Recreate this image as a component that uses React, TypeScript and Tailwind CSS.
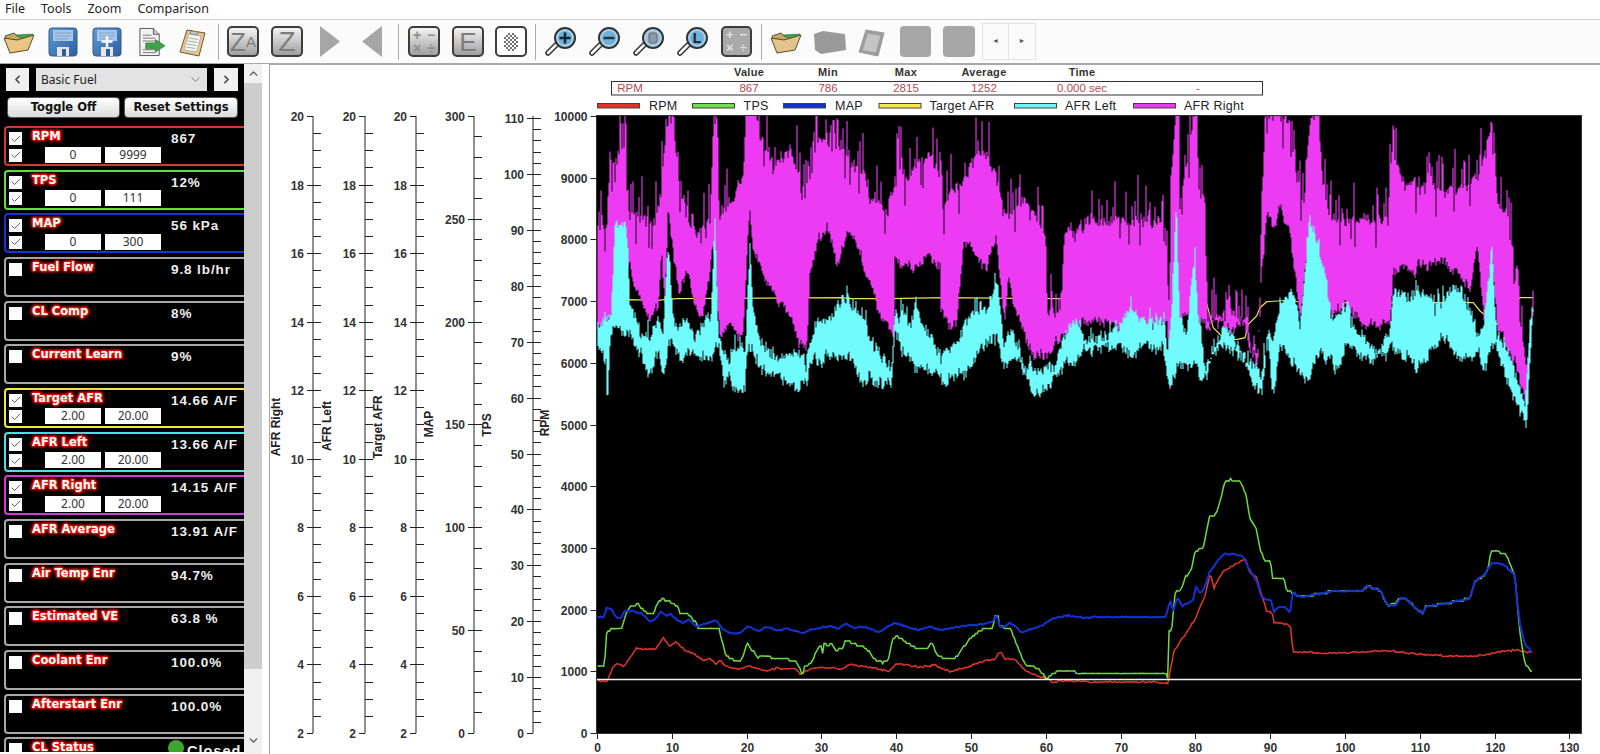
import { Check, ChevronDown, ChevronLeft, ChevronRight, ChevronUp } from "lucide-react";

type Pt = [number, number];

const crop = (ox: number, oy: number, sx: number, pts: Pt[]): Pt[] =>
  pts.map(([x, y]) => [ox + x / sx, oy + y / 3]);

// chart traces, read off the log view
const rpmTrace = [
  ...crop(590, 560, 2.904, [[22,360],[50,360],[65,320],[80,308],[100,315],[135,262],[160,265],[190,265],[212,230],[230,255],[250,242],[280,272],[305,280],[330,300],[350,292],[365,310],[378,295],[392,315],[430,325],[465,315],[510,330],[540,322],[600,325],[610,340],[650,320],[730,323],[755,310],[820,320],[870,330],[890,308],[960,318],[1000,312],[1045,332],[1090,320],[1150,298],[1175,295],[1192,270],[1205,295],[1235,295],[1260,325],[1300,345],[1330,352],[1340,362],[1400,360],[1450,362],[1560,362]]),
  ...crop(1100, 560, 3, [[38,362],[205,365],[212,320],[222,270]]),
  ...crop(1130, 440, 3, [[195,535],[225,465],[240,398],[252,440],[278,392],[345,353],[360,395],[380,410],[410,510],[430,520]]),
  ...crop(1100, 560, 3, [[520,185],[560,188],[575,205],[577,272],[700,277],[800,272],[870,270],[960,280],[1050,285],[1130,285],[1200,272],[1250,267],[1300,275]]),
];

const tpsTrace = [
  ...crop(590, 560, 2.904, [[22,315],[42,315],[48,215],[60,205],[92,205],[105,158],[120,135],[140,130],[165,157],[185,155],[200,118],[215,115],[255,135],[262,155],[285,160],[308,185],[312,200],[375,205],[395,285],[430,305],[442,290],[455,248],[468,262],[485,290],[520,282],[530,292],[595,298],[610,320],[617,345],[622,315],[640,310],[660,265],[670,250],[675,280],[680,242],[690,260],[700,247],[715,270],[735,258],[742,235],[760,247],[800,260],[830,297],[850,305],[865,300],[880,232],[892,226],[935,255],[960,265],[985,258],[992,245],[1010,285],[1035,292],[1060,292],[1080,265],[1105,230],[1140,205],[1170,205],[1175,165],[1185,165],[1190,197],[1220,203],[1245,265],[1265,315],[1300,320],[1325,352],[1340,340],[1365,328],[1420,335],[1560,335]]),
  ...crop(1100, 560, 3, [[38,335],[198,335],[203,350],[207,210],[215,205],[225,98]]),
  ...crop(1130, 440, 3, [[132,458],[155,445],[165,410],[185,385],[195,330],[220,322],[238,228],[255,225],[270,180],[285,125],[300,115],[335,125],[350,170],[360,235],[378,258],[390,325],[405,360],[422,362],[427,415],[460,410],[470,445],[490,458],[500,462],[515,468],[610,450],[697,450],[710,435],[750,448],[772,492],[790,490],[812,470],[830,475],[865,510],[880,515],[885,497],[960,485],[1020,472],[1035,420],[1060,405],[1075,380],[1082,332],[1105,332],[1130,342],[1155,405],[1165,520]]),
  ...crop(1100, 560, 3, [[1258,200],[1265,250],[1275,310],[1300,335]]),
];

const mapTrace = [
  ...crop(590, 560, 2.904, [[22,168],[40,168],[48,142],[60,142],[78,172],[90,172],[100,150],[125,150],[150,158],[175,182],[190,172],[205,153],[220,165],[235,160],[255,178],[270,185],[285,175],[310,195],[330,190],[345,185],[362,178],[372,185],[385,205],[410,217],[435,217],[458,195],[490,212],[512,198],[540,206],[580,205],[620,217],[640,205],[700,195],[720,203],[742,187],[765,200],[800,198],[838,214],[885,185],[950,207],[990,198],[1020,208],[1080,195],[1130,190],[1170,182],[1180,162],[1192,200],[1205,195],[1220,185],[1235,195],[1252,215],[1280,205],[1310,195],[1345,172],[1390,163],[1430,170],[1560,167]]),
  ...crop(1130, 440, 3, [[0,527],[108,527],[120,478],[130,510],[142,470],[158,495],[190,477],[197,435],[208,455],[222,445],[240,390],[270,350],[285,338],[335,342],[350,370],[380,420],[395,470],[425,480],[430,515],[445,497],[465,497],[480,518],[488,455],[500,462],[515,468],[610,450],[697,450],[710,435],[750,448],[772,492],[795,495],[812,470],[830,475],[865,510],[880,518],[885,497],[960,485],[1020,472],[1035,420],[1060,405],[1085,367],[1110,367],[1130,378],[1155,405],[1160,480],[1170,540]]),
  ...crop(1100, 560, 3, [[1260,190],[1275,250],[1300,278]]),
];

const targetTrace = [
  ...crop(590, 110, 3, [[24,568],[120,566],[200,568],[260,563],[760,560],[775,563],[900,563],[1060,560],[1400,563]]),
  ...crop(1080, 110, 3, [[265,570],[378,570],[400,650],[430,680],[470,686],[495,680],[505,640],[530,615],[540,590],[560,572],[640,567],[660,575],[1180,575],[1200,600],[1250,640],[1310,570],[1320,560],[1360,560]]),
];

const rightTop = [
  ...crop(590, 110, 3, [[24,350],[50,350],[60,120],[110,120],[118,320],[170,340],[195,330],[215,220],[228,20],[255,20],[262,200],[300,340],[320,365],[360,320],[370,20],[382,20],[388,320],[430,300],[460,200],[470,20],[500,20],[510,100],[550,170],[600,120],[640,280],[655,200],[665,90],[730,90],[760,100],[820,170],[840,260],[900,280],[920,160],[965,200],[1020,120],[1060,280],[1110,220],[1150,140],[1220,160],[1235,330],[1300,280],[1368,390],[1372,590],[1410,590],[1425,350],[1500,330]]),
  ...crop(1080, 110, 3, [[255,335],[268,560],[275,200],[282,100],[288,20],[297,20],[300,280],[320,200],[345,20],[352,20],[355,220],[375,280],[380,620],[430,610],[500,610],[510,700],[535,750],[540,600],[545,260],[555,90],[560,20],[640,20],[650,200],[670,320],[690,20],[715,20],[725,180],[745,330],[800,330],[920,330],[935,160],[985,220],[1060,230],[1120,240],[1190,220],[1230,60],[1240,20],[1250,250],[1285,290],[1300,420],[1315,600],[1340,790],[1355,620],[1358,600]]),
];

const rightBottom = [
  ...crop(590, 110, 3, [[24,640],[60,640],[118,470],[150,540],[180,620],[205,600],[215,430],[225,600],[235,300],[250,420],[270,550],[290,470],[310,570],[335,630],[355,520],[370,430],[390,680],[420,610],[460,660],[478,260],[490,400],[515,460],[535,520],[560,560],[600,600],[650,720],[660,470],[685,375],[715,370],[740,480],[775,370],[810,450],[850,540],[880,650],[912,690],[915,440],[950,480],[1010,430],[1050,470],[1052,600],[1075,640],[1100,630],[1120,420],[1150,410],[1190,450],[1218,400],[1245,600],[1255,490],[1275,600],[1330,700],[1380,740],[1420,680],[1500,640]]),
  ...crop(1080, 110, 3, [[262,640],[270,850],[285,640],[300,600],[315,580],[340,620],[375,620],[380,640],[430,640],[500,655],[510,720],[535,750],[540,560],[560,300],[580,340],[600,290],[625,360],[640,460],[660,620],[690,350],[720,460],[750,600],[800,580],[860,640],[930,640],[940,460],[1000,480],[1050,440],[1120,470],[1170,530],[1190,390],[1215,650],[1235,420],[1255,680],[1300,760],[1340,860],[1355,620]]),
];

const leftTop = [
  ...crop(590, 110, 3, [[24,640],[50,640],[62,620],[75,340],[110,340],[120,560],[150,650],[180,690],[205,610],[220,690],[235,400],[250,620],[270,660],[290,620],[320,670],[350,640],[362,680],[375,340],[385,670],[400,740],[465,740],[480,400],[490,600],[510,700],[560,730],[650,740],[680,600],[730,620],[775,590],[810,670],[860,730],[905,760],[915,590],[960,640],[985,600],[1020,670],[1060,730],[1100,710],[1150,620],[1190,600],[1222,500],[1240,700],[1265,650],[1300,740],[1340,780],[1385,770],[1420,700],[1470,650],[1500,680]]),
  ...crop(1080, 110, 3, [[130,625],[250,625],[262,700],[275,600],[290,240],[298,600],[320,680],[345,400],[355,620],[380,780],[430,650],[470,700],[530,790],[545,790],[565,650],[580,700],[600,570],[640,540],[660,650],[690,350],[715,400],[760,640],[800,560],[830,640],[880,680],[925,680],[940,540],[1000,570],[1060,560],[1120,530],[1180,620],[1210,660],[1235,390],[1250,650],[1300,780],[1335,880],[1350,620],[1358,590]]),
];

const leftBottom = [
  ...crop(590, 110, 3, [[24,720],[48,720],[52,880],[60,700],[75,650],[120,680],[150,740],[180,790],[205,720],[218,790],[235,680],[270,735],[330,740],[385,690],[400,810],[465,815],[475,690],[510,760],[560,810],[650,825],[660,760],[700,780],[730,720],[775,700],[830,770],[890,830],[905,820],[915,680],[990,770],[1060,810],[1120,770],[1180,700],[1225,690],[1240,770],[1270,740],[1330,850],[1390,820],[1430,720],[1500,730]]),
  ...crop(1080, 110, 3, [[130,710],[250,710],[268,850],[300,770],[350,770],[370,820],[390,740],[430,690],[470,730],[530,820],[545,850],[565,700],[580,860],[600,710],[670,790],[720,720],[780,770],[800,710],[880,790],[930,720],[1020,740],[1100,700],[1180,740],[1215,770],[1235,700],[1300,840],[1340,950],[1350,780],[1358,610]]),
];

function valueAt(pts: Pt[], x: number) {
  if (x <= pts[0][0]) return pts[0][1];
  for (let i = 1; i < pts.length; i++) {
    if (x <= pts[i][0]) {
      const [x0, y0] = pts[i - 1];
      const [x1, y1] = pts[i];
      return x1 === x0 ? y1 : y0 + ((x - x0) / (x1 - x0)) * (y1 - y0);
    }
  }
  return pts[pts.length - 1][1];
}

function seeded(seed: number) {
  let s = seed;
  return () => (s = (s * 16807) % 2147483647) / 2147483647;
}

function noisyBand(top: Pt[], bottom: Pt[], seed: number, upChance: number, upSize: number, jitter: number) {
  const rand = seeded(seed);
  let drift = 0;
  let d = "";
  for (let x = 598; x <= 1533; x++) {
    drift = drift * 0.88 + (rand() - 0.5) * jitter;
    let t = valueAt(top, x) + drift + (rand() - 0.5) * jitter;
    const b = valueAt(bottom, x) - drift + (rand() - 0.5) * jitter;
    if (rand() < upChance) t -= rand() * upSize;
    else if (rand() < upChance / 2) t += rand() * upSize * 0.8;
    d += `M${x} ${Math.max(115, Math.min(t, b)).toFixed(1)}V${Math.max(115, Math.max(t, b)).toFixed(1)}`;
  }
  return d;
}

function roughen(pts: Pt[], seed: number, step: number, fuzz: number): Pt[] {
  const rand = seeded(seed);
  const out: Pt[] = [];
  const end = pts[pts.length - 1][0];
  for (let x = pts[0][0]; x <= end; x += 1.5) {
    out.push([x, Math.round(valueAt(pts, x) / step) * step + (rand() - 0.5) * fuzz]);
  }
  return out;
}

const rightBand = noisyBand(rightTop, rightBottom, 4711, 0.3, 42, 8);
const leftBand = noisyBand(leftTop, leftBottom, 90210, 0.12, 14, 9);
const rpmLine = roughen(rpmTrace, 123, 1, 1.4);
const tpsLine = roughen(tpsTrace, 456, 2.5, 0.4);
const mapLine = roughen(mapTrace, 789, 1, 1);

const toPoints = (pts: Pt[]) => pts.map(([x, y]) => `${x.toFixed(1)},${y.toFixed(1)}`).join(" ");

interface AxisProps {
  x: number;
  title: string;
  titleX: number;
  titleY: number;
  min: number;
  max: number;
  major: number;
  minor: number;
  unit: number;
}

function Axis({ x, title, titleX, titleY, min, max, major, minor, unit }: AxisProps) {
  const ticks: number[] = [];
  for (let v = min; v <= max + 0.001; v += minor) ticks.push(v);
  return (
    <g>
      <line x1={x} x2={x} y1={115} y2={732} stroke="#222" />
      {ticks.map((v) => {
        const y = Math.round(732 - (v - min) * unit) + 0.5;
        const isMajor = Math.abs(v / major - Math.round(v / major)) < 0.001;
        const atEnd = y < 116 || y > 732;
        return (
          <g key={v}>
            <line x1={isMajor ? x - 6 : x} x2={atEnd ? x : x + 8} y1={y} y2={y} stroke="#222" />
            {isMajor && (
              <text x={x - 9} y={y + 4.5} textAnchor="end" fontSize={12} fontWeight={700} fill="#333">
                {v}
              </text>
            )}
          </g>
        );
      })}
      <text
        transform={`translate(${titleX} ${titleY}) rotate(-90)`}
        textAnchor="middle"
        fontSize={12}
        fontWeight={700}
        fill="#222"
      >
        {title}
      </text>
    </g>
  );
}

const legend = [
  { name: "RPM", color: "#e0342a", sx: 597, tx: 649 },
  { name: "TPS", color: "#6fe04a", sx: 692, tx: 743.5 },
  { name: "MAP", color: "#1030d0", sx: 783, tx: 835 },
  { name: "Target AFR", color: "#f5e94e", sx: 878.5, tx: 929.5 },
  { name: "AFR Left", color: "#6ff5f5", sx: 1014, tx: 1065 },
  { name: "AFR Right", color: "#e83cf0", sx: 1133, tx: 1184 },
];

function Chart() {
  return (
    <svg viewBox="270 64 1330 690" className="block h-[690px] w-[1330px] bg-white">
      {[
        ["Value", 749],
        ["Min", 828],
        ["Max", 906],
        ["Average", 984],
        ["Time", 1082],
      ].map(([t, x]) => (
        <text key={t} x={x} y={75} textAnchor="middle" fontSize={11} fontWeight={700} fill="#333" letterSpacing={0.3}>
          {t}
        </text>
      ))}
      <rect x={611.5} y={80.5} width={651} height={13.5} fill="#fff" stroke="#333" />
      {[
        ["RPM", 630],
        ["867", 749],
        ["786", 828],
        ["2815", 906],
        ["1252", 984],
        ["0.000 sec", 1082],
        ["-", 1198],
      ].map(([t, x]) => (
        <text key={t} x={x} y={91} textAnchor="middle" fontSize={11.5} fill="#b8484c">
          {t}
        </text>
      ))}
      {legend.map((l) => (
        <g key={l.name}>
          <rect x={l.sx + 0.5} y={102.5} width={42} height={4.5} fill={l.color} stroke="#444" />
          <text x={l.tx} y={108.5} fontSize={12.5} fill="#222" letterSpacing={0.25}>
            {l.name}
          </text>
        </g>
      ))}

      <Axis x={313} title="AFR Right" titleX={280} titleY={426} min={2} max={20} major={2} minor={0.5} unit={34.28} />
      <Axis x={365} title="AFR Left" titleX={331} titleY={425} min={2} max={20} major={2} minor={0.5} unit={34.28} />
      <Axis x={416} title="Target AFR" titleX={382} titleY={426} min={2} max={20} major={2} minor={0.5} unit={34.28} />
      <Axis x={474} title="MAP" titleX={433} titleY={423} min={0} max={300} major={50} minor={10} unit={2.057} />
      <Axis x={533} title="TPS" titleX={491} titleY={424} min={0} max={110} major={10} minor={2} unit={5.59} />
      <Axis x={596.5} title="RPM" titleX={549} titleY={422} min={0} max={10000} major={1000} minor={1000} unit={0.0617} />

      <rect x={597} y={115} width={984} height={617} fill="#000" />
      <rect x={596.5} y={114.5} width={985} height={618} fill="none" stroke="#333" />
      <polyline points={toPoints(targetTrace)} fill="none" stroke="#e9e04a" strokeWidth={1.2} />
      <path d={rightBand} stroke="#ec3bf2" strokeWidth={1.1} />
      <path d={leftBand} stroke="#70fbfd" strokeWidth={1.1} />
      <polyline points={toPoints(rpmLine)} fill="none" stroke="#e3352b" strokeWidth={1.5} />
      <polyline points={toPoints(tpsLine)} fill="none" stroke="#6fdc3e" strokeWidth={1.5} />
      <polyline points={toPoints(mapLine)} fill="none" stroke="#1232d4" strokeWidth={2} />
      <line x1={597} x2={1581} y1={678.5} y2={678.5} stroke="#f2f2f2" strokeWidth={1.3} />

      {[0, 10, 20, 30, 40, 50, 60, 70, 80, 90, 100, 110, 120, 130].map((v) => {
        const x = Math.round(597 + v * 7.48) + 0.5;
        return (
          <g key={v}>
            <line x1={x} x2={x} y1={733} y2={738} stroke="#222" />
            <text x={x} y={751} textAnchor="middle" fontSize={12} fontWeight={700} fill="#333">
              {v}
            </text>
          </g>
        );
      })}
    </svg>
  );
}

interface RowData {
  label: string;
  value: string;
  border?: string;
  range?: [string, string];
}

const rows: RowData[] = [
  { label: "RPM", value: "867", border: "border-[#d9362a]", range: ["0", "9999"] },
  { label: "TPS", value: "12%", border: "border-[#5fe040]", range: ["0", "111"] },
  { label: "MAP", value: "56 kPa", border: "border-[#1433d8]", range: ["0", "300"] },
  { label: "Fuel Flow", value: "9.8 lb/hr" },
  { label: "CL Comp", value: "8%" },
  { label: "Current Learn", value: "9%" },
  { label: "Target AFR", value: "14.66 A/F", border: "border-[#f2e540]", range: ["2.00", "20.00"] },
  { label: "AFR Left", value: "13.66 A/F", border: "border-[#4fe0e6]", range: ["2.00", "20.00"] },
  { label: "AFR Right", value: "14.15 A/F", border: "border-[#d03cd4]", range: ["2.00", "20.00"] },
  { label: "AFR Average", value: "13.91 A/F" },
  { label: "Air Temp Enr", value: "94.7%" },
  { label: "Estimated VE", value: "63.8 %" },
  { label: "Coolant Enr", value: "100.0%" },
  { label: "Afterstart Enr", value: "100.0%" },
];

const glowLabel =
  "mt-[2px] pl-px font-['DejaVu_Sans',sans-serif] text-[11.5px] leading-[13px] font-bold text-white [text-shadow:0_0_1px_#f01408,1px_1px_2px_#f01408,-1px_-1px_2px_#f01408,1px_-1px_2px_#f01408,-1px_1px_2px_#f01408,0_0_4px_#e0140c,0_0_5px_#c0100a]";

function CheckBox({ checked }: { checked?: boolean }) {
  return (
    <span className="flex h-[13px] w-[13px] items-center justify-center bg-white">
      {checked && <Check size={12} strokeWidth={2} className="text-[#666]" />}
    </span>
  );
}

function RangeInput({ value }: { value: string }) {
  return (
    <span className="flex h-4 w-[56px] items-center justify-center bg-white font-['Noto_Sans',sans-serif] text-[12px] text-[#333]">
      {value}
    </span>
  );
}

function SensorRow({ label, value, border, range }: RowData) {
  return (
    <div className={`flex h-10 w-[260px] shrink-0 rounded-[4px] border-2 ${border ?? "border-[#a8a8a8]"}`}>
      <div className="flex w-[25px] shrink-0 flex-col gap-[3.5px] pl-[3px] pt-[4px]">
        <CheckBox checked={!!range} />
        {range && <CheckBox checked />}
      </div>
      <div className="flex w-[140px] shrink-0 flex-col">
        <span className={glowLabel}>{label}</span>
        {range && (
          <div className="mt-[3.5px] ml-[14px] flex gap-1">
            <RangeInput value={range[0]} />
            <RangeInput value={range[1]} />
          </div>
        )}
      </div>
      <span className="pt-[3px] text-[13.5px] leading-[16px] font-bold tracking-[0.9px] whitespace-nowrap text-[#eee]">
        {value}
      </span>
    </div>
  );
}

function Sidebar() {
  return (
    <aside className="flex h-[688px] w-[244px] shrink-0 flex-col overflow-hidden bg-black">
      <div className="mt-1 ml-[5.5px] flex h-[23px] items-center">
        <button className="flex h-[23px] w-[23.5px] items-center justify-center bg-[#f0f0f0]">
          <ChevronLeft size={13} strokeWidth={3} className="text-[#444]" />
        </button>
        <div className="ml-[7px] flex h-[23px] w-[171px] items-center justify-between bg-[#e3e3e3] pr-[4px] pl-[5px] font-['Noto_Sans',sans-serif] text-[12px] text-[#222]">
          Basic Fuel
          <ChevronDown size={15} strokeWidth={1.5} className="text-[#777]" />
        </div>
        <button className="ml-[7px] flex h-[23px] w-[24px] items-center justify-center bg-[#f0f0f0]">
          <ChevronRight size={13} strokeWidth={3} className="text-[#444]" />
        </button>
      </div>
      <div className="mt-[6px] ml-[7px] flex gap-1">
        <button className="h-[21px] w-[113px] rounded-[4px] border border-[#555] bg-gradient-to-b from-white to-[#dcdcdc] font-['DejaVu_Sans',sans-serif] text-[11.5px] font-bold text-[#111]">
          Toggle Off
        </button>
        <button className="h-[21px] w-[114px] rounded-[4px] border border-[#555] bg-gradient-to-b from-white to-[#dcdcdc] font-['DejaVu_Sans',sans-serif] text-[11.5px] font-bold text-[#111]">
          Reset Settings
        </button>
      </div>
      <div className="mt-2 ml-1 flex flex-col gap-[3.67px]">
        {rows.map((r) => (
          <SensorRow key={r.label} {...r} />
        ))}
        <div className="flex h-10 w-[260px] shrink-0 rounded-[4px] border-2 border-[#a8a8a8]">
          <div className="w-[25px] shrink-0 pl-[3px] pt-[4px]">
            <CheckBox />
          </div>
          <span className={`${glowLabel} w-[137px] shrink-0`}>CL Status</span>
          <span className="mt-px h-4 w-4 shrink-0 rounded-full bg-[#3da52e]" />
          <span className="ml-[3px] mt-[2px] text-[14.5px] font-bold tracking-[1px] whitespace-nowrap text-[#eee]">
            Closed Loop
          </span>
        </div>
      </div>
    </aside>
  );
}

function Scrollbar() {
  return (
    <div className="flex h-[690px] w-[18px] shrink-0 flex-col items-center bg-[#f0f0f0]">
      <div className="flex h-[19px] items-center">
        <ChevronUp size={13} strokeWidth={2.5} className="text-[#555]" />
      </div>
      <div className="h-[586px] w-full bg-[#cdcdcd]" />
      <div className="mt-auto mb-[4px] flex h-[19px] items-center">
        <ChevronDown size={13} strokeWidth={2.5} className="text-[#555]" />
      </div>
    </div>
  );
}

const zFace =
  "flex h-[31px] w-[32px] shrink-0 items-center justify-center rounded-[5px] border-2 border-[#3c3c3c] bg-gradient-to-b from-[#f4f4f4] via-[#c9c9c9] to-[#9f9f9f] font-['Liberation_Sans',sans-serif] text-[#7d7d7d]";

function Folder({ tone = "#e9c684" }: { tone?: string }) {
  return (
    <svg viewBox="0 0 32 24" className="h-6 w-8 shrink-0">
      <path d="M2 6 L11 3 L14 6 L26 5 L25 16 L8 22 Z" fill="#c9a662" stroke="#555" />
      <path d="M13 5 L30 4 L25 13 Z" fill="#3ea34a" stroke="#2e6a36" strokeWidth={0.6} />
      <path d="M1 8 L14 10 L31 5 L25 20 L7 23 Z" fill={tone} stroke="#5a4a2a" />
    </svg>
  );
}

function Floppy({ plus }: { plus?: boolean }) {
  return (
    <svg viewBox="0 0 30 30" className="h-[30px] w-[30px] shrink-0">
      <defs>
        <linearGradient id="fl" x1="0" y1="0" x2="1" y2="1">
          <stop offset="0" stopColor="#5d9ad8" />
          <stop offset="1" stopColor="#2c5f9f" />
        </linearGradient>
      </defs>
      <rect x="1" y="1" width="28" height="28" rx="3" fill="url(#fl)" stroke="#355a86" />
      <rect x="5" y="3" width="20" height="11" fill="#a8c6e8" />
      <path d="M7 6H23M7 9H23M7 12H20" stroke="#7ea3cc" />
      <rect x="9" y="20" width="12" height="9" fill="#e6e6e6" />
      <rect x="14" y="22" width="4" height="7" fill="#2c5f9f" />
      {plus && <path d="M15 9V20M9.500 14.500H20.500" stroke="#fff" strokeWidth="2.500" />}
    </svg>
  );
}

function ExportDoc() {
  return (
    <svg viewBox="0 0 30 30" className="h-[30px] w-[29px] shrink-0">
      <path d="M3 1H17L23 7V29H3Z" fill="#f2f2f2" stroke="#555" />
      <path d="M17 1V7H23" fill="#ccc" stroke="#555" />
      <path d="M6 8H15M6 11H19M6 14H19M6 23H19M6 26H19" stroke="#777" />
      <path d="M9 16H19V12.500L29 19L19 25.500V22H9Z" fill="#3ea34a" stroke="#2f7a3a" strokeWidth="0.7" />
    </svg>
  );
}

function Clipboard({ ghost }: { ghost?: boolean }) {
  return (
    <svg viewBox="0 0 30 30" className="h-[30px] w-[30px] shrink-0">
      <path d="M9 3L27 6L21 29L2 25Z" fill={ghost ? "#9c9c9c" : "#e3c68e"} stroke={ghost ? "#9c9c9c" : "#6a5630"} />
      <path d="M11 7L23 9L18.500 25L6 23Z" fill={ghost ? "#c4c4c4" : "#f4f4f4"} stroke={ghost ? "#c4c4c4" : "#999"} strokeWidth="0.6" />
      {!ghost && <path d="M11 11L20 12.500M10 14L19.500 15.500M9 17L18.500 18.500M8.500 20L17 21.500" stroke="#aaa" />}
      {!ghost && <path d="M13 4L20 5L19 8L12 7Z" fill="#c9c9c9" stroke="#666" strokeWidth="0.6" />}
    </svg>
  );
}

function Magnifier({ mark }: { mark: "plus" | "minus" | "page" | "L" }) {
  return (
    <svg viewBox="0 0 32 31" className="h-[31px] w-8 shrink-0">
      <path d="M11 19L3 27" stroke="#333" strokeWidth="5.500" strokeLinecap="round" />
      <path d="M11 19L3 27" stroke="#fff" strokeWidth="2.500" strokeLinecap="round" />
      <circle cx="20" cy="12" r="10" fill="#a9d3ea" stroke="#333" strokeWidth="2" />
      <circle cx="20" cy="12" r="7" fill={mark === "page" ? "#9dbccc" : "#6db0d9"} />
      {mark === "plus" && <path d="M20 6.500V17.500M14.500 12H25.500" stroke="#123" strokeWidth="2.500" />}
      {mark === "minus" && <path d="M14.500 12H25.500" stroke="#234" strokeWidth="2.500" />}
      {mark === "page" && <rect x="16" y="7" width="8" height="10" rx="2" fill="#8b9ba5" stroke="#667" />}
      {mark === "L" && (
        <text x="20" y="17" textAnchor="middle" fontSize="14" fontWeight="700" fill="#123">
          L
        </text>
      )}
    </svg>
  );
}

function Triangle({ left }: { left?: boolean }) {
  return (
    <svg viewBox="0 0 20 31" className="h-[31px] w-5 shrink-0">
      <path d={left ? "M20 0V31L0 15.500Z" : "M0 0V31L20 15.500Z"} fill="#a6a6a6" />
    </svg>
  );
}

function CalcFace() {
  return (
    <div className={`${zFace} grid grid-cols-2 place-items-center text-[14px] leading-[12px] font-bold text-[#8f8f8f]`}>
      <span>+</span>
      <span>−</span>
      <span>×</span>
      <span>÷</span>
    </div>
  );
}

const dotRows = [
  [7, 11],
  [5, 9, 13],
  [3, 7, 11, 15],
  [5, 9, 13],
  [3, 7, 11, 15],
  [5, 9, 13],
  [3, 7, 11, 15],
  [5, 9, 13],
  [7, 11],
];

function Toolbar() {
  return (
    <div className="flex h-[43px] items-center bg-[#fbfbfb]">
      <div className="ml-[3px]">
        <Folder />
      </div>
      <div className="ml-[13px]">
        <Floppy />
      </div>
      <div className="ml-[14px]">
        <Floppy plus />
      </div>
      <div className="ml-[15px]">
        <ExportDoc />
      </div>
      <div className="ml-[12px]">
        <Clipboard />
      </div>
      <div className="ml-[10px] h-[36px] w-px bg-[#aaa]" />
      <div className={`${zFace} ml-[8px] text-[26px] leading-none`}>
        Z<span className="text-[15px]">A</span>
      </div>
      <div className={`${zFace} ml-[12px] text-[28px] leading-none`}>Z</div>
      <div className="ml-[17px]">
        <Triangle />
      </div>
      <div className="ml-[22px]">
        <Triangle left />
      </div>
      <div className="ml-[16px] h-[36px] w-px bg-[#aaa]" />
      <div className="ml-[9px]">
        <CalcFace />
      </div>
      <div className={`${zFace} ml-[12px] text-[26px] leading-none`}>E</div>
      <div className="ml-[11px] flex h-[31px] w-[32px] shrink-0 items-center justify-center rounded-[5px] border-2 border-[#3c3c3c] bg-white">
        <svg viewBox="0 0 18 22" className="h-[22px] w-[18px]">
          {dotRows.flatMap((xs, i) =>
            xs.map((x) => <circle key={`${x}-${i}`} cx={x} cy={3 + i * 2} r={0.95} fill="#333" />),
          )}
        </svg>
      </div>
      <div className="ml-[8px] h-[36px] w-px bg-[#aaa]" />
      <div className="ml-[9px]">
        <Magnifier mark="plus" />
      </div>
      <div className="ml-[12px]">
        <Magnifier mark="minus" />
      </div>
      <div className="ml-[12px]">
        <Magnifier mark="page" />
      </div>
      <div className="ml-[12px]">
        <Magnifier mark="L" />
      </div>
      <div className="ml-[12px] grid h-[31px] w-[31px] shrink-0 grid-cols-2 place-items-center rounded-[5px] border-2 border-[#3c3c3c] bg-[#a9a9a9] font-['Liberation_Sans',sans-serif] text-[13px] leading-[12px] font-bold text-[#e2e2e2]">
        <span>+</span>
        <span>−</span>
        <span>×</span>
        <span>÷</span>
      </div>
      <div className="ml-[9px] h-[36px] w-px bg-[#aaa]" />
      <div className="ml-[8px]">
        <Folder tone="#e4c48c" />
      </div>
      <svg viewBox="0 0 33 24" className="ml-[11px] h-6 w-[33px] shrink-0">
        <path d="M1 4L10 1L32 4L33 20L8 24L2 20Z" fill="#9a9a9a" />
      </svg>
      <div className="ml-[11px]">
        <Clipboard ghost />
      </div>
      <div className="ml-[13px] h-[31px] w-[31px] shrink-0 rounded-[4px] bg-[#a6a6a6]" />
      <div className="ml-[12px] h-[31px] w-[32px] shrink-0 rounded-[4px] bg-[#a6a6a6]" />
      <div className="ml-[7px] flex h-[37px] shrink-0 border border-[#e4e4e4]">
        <div className="flex w-[26px] items-center justify-center border-r border-[#e4e4e4] text-[7px] text-[#555]">◄</div>
        <div className="flex w-[26px] items-center justify-center text-[7px] text-[#555]">►</div>
      </div>
    </div>
  );
}

export default function App() {
  return (
    <div className="flex h-[754px] w-[1600px] flex-col overflow-hidden bg-white font-['Liberation_Sans',sans-serif]">
      <nav className="flex h-5 shrink-0 items-center gap-[16px] border-b border-[#cfcfcf] pl-[5px] font-['Noto_Sans',sans-serif] text-[12.5px] text-[#222]">
        <span>File</span>
        <span>Tools</span>
        <span>Zoom</span>
        <span>Comparison</span>
      </nav>
      <Toolbar />
      <div className="h-[1px] shrink-0 bg-[#a9a9a9]" />
      <main className="flex min-h-0 flex-1">
        <Sidebar />
        <Scrollbar />
        <div className="w-[7px] shrink-0 bg-white" />
        <div className="shrink-0 border-t border-l border-[#a8a8a8]">
          <Chart />
        </div>
      </main>
    </div>
  );
}
